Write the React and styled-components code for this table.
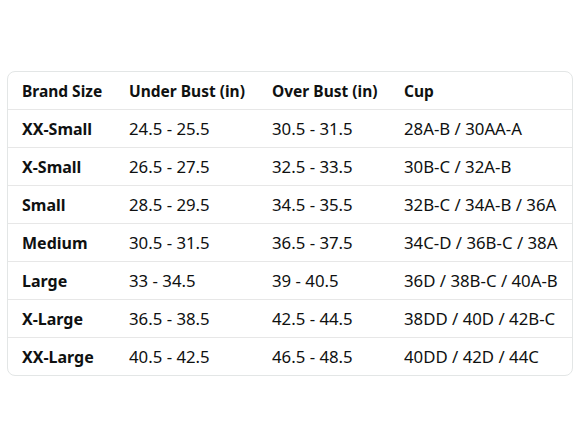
import React from "react";
import styled, { createGlobalStyle } from "styled-components";

const GlobalStyle = createGlobalStyle`
  html, body {
    margin: 0;
    padding: 0;
    background: #ffffff;
  }
  body {
    font-family: "Noto Sans", "Open Sans", Arial, sans-serif;
    color: #0f1111;
  }
`;

const Page = styled.div`
  width: 588px;
  height: 441px;
  box-sizing: border-box;
  padding: 71px 15px 0 7px;
`;

const Table = styled.div`
  border: 1px solid #e3e6e6;
  border-radius: 8px;
  overflow: hidden;
`;

const Row = styled.div`
  display: grid;
  grid-template-columns: 107px 143px 132px 1fr;
  height: 37px;
  align-items: center;
  border-top: ${(p) => (p.$first ? "none" : "1px solid #e7e7e7")};
`;

const Cell = styled.div`
  padding-left: 14px;
  font-size: ${(p) => (p.$head ? "15.5px" : p.$bold ? "16px" : "16.8px")};
  font-weight: ${(p) => (p.$bold ? 700 : 400)};
  white-space: nowrap;
`;

const header = ["Brand Size", "Under Bust (in)", "Over Bust (in)", "Cup"];

const rows = [
  ["XX-Small", "24.5 - 25.5", "30.5 - 31.5", "28A-B / 30AA-A"],
  ["X-Small", "26.5 - 27.5", "32.5 - 33.5", "30B-C / 32A-B"],
  ["Small", "28.5 - 29.5", "34.5 - 35.5", "32B-C / 34A-B / 36A"],
  ["Medium", "30.5 - 31.5", "36.5 - 37.5", "34C-D / 36B-C / 38A"],
  ["Large", "33 - 34.5", "39 - 40.5", "36D / 38B-C / 40A-B"],
  ["X-Large", "36.5 - 38.5", "42.5 - 44.5", "38DD / 40D / 42B-C"],
  ["XX-Large", "40.5 - 42.5", "46.5 - 48.5", "40DD / 42D / 44C"],
];

export default function App() {
  return (
    <>
      <GlobalStyle />
      <Page>
        <Table>
          <Row $first>
            {header.map((h) => (
              <Cell key={h} $bold $head>
                {h}
              </Cell>
            ))}
          </Row>
          {rows.map((r) => (
            <Row key={r[0]}>
              {r.map((c, i) => (
                <Cell key={i} $bold={i === 0}>
                  {c}
                </Cell>
              ))}
            </Row>
          ))}
        </Table>
      </Page>
    </>
  );
}
